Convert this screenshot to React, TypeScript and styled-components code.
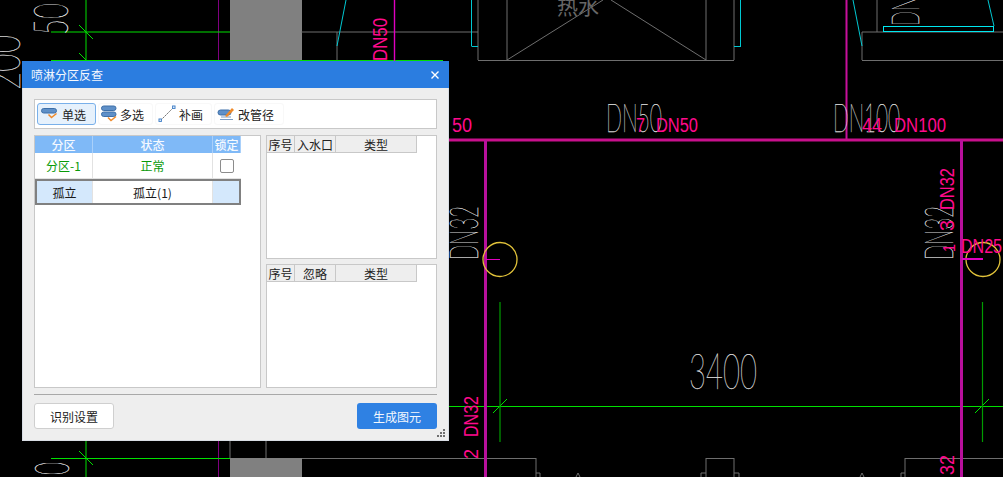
import styled, { createGlobalStyle } from 'styled-components';

const GlobalStyle = createGlobalStyle`
	html, body {
		margin: 0;
		padding: 0;
		background: #000;
	}
	* {
		box-sizing: border-box;
	}
`;

const CJK = `"Noto Sans CJK SC", "Liberation Sans", sans-serif`;

type Seg = [number, number, number, number];

const GRAY: Seg[] = [
	[301, 32, 478, 32],
	[337, 32, 337, 60],
	[478, 0, 478, 60],
	[478, 60.5, 734, 60.5],
	[507, 0, 507, 60],
	[706, 0, 706, 60],
	[734, 0, 734, 60],
	[507, 60, 603, 0],
	[706, 60, 611, 0],
	[862, 32, 862, 60],
	[862, 60.5, 1003, 60.5],
	[862, 32, 1003, 32],
	[877, 0, 877, 32],
	[230, 440, 230, 458],
	[266, 440, 266, 458],
	[302, 458.5, 536, 458.5],
	[536, 458, 536, 477],
	[536, 473, 540, 473],
	[540, 473, 540, 477],
	[706, 458.5, 734, 458.5],
	[706, 458, 706, 477],
	[734, 458, 734, 477],
	[701, 473, 706, 473],
	[701, 473, 701, 477],
	[734, 473, 739, 473],
	[739, 473, 739, 477],
	[905, 458.5, 1003, 458.5],
	[905, 458, 905, 477],
	[901, 473, 905, 473],
	[901, 473, 901, 477],
	[576, 477, 578, 473],
	[578, 473, 580, 477],
	[860, 477, 862, 473],
	[862, 473, 864, 477],
];

const GREEN: Seg[] = [
	[51, 32, 230, 32],
	[86, 0, 86, 61],
	[79, 25, 93, 39],
	[79, 53, 86, 60],
	[51, 60.5, 443, 60.5],
	[51, 458.5, 230, 458.5],
	[86, 440, 86, 477],
	[79, 451, 93, 465],
	[449, 406.5, 1003, 406.5],
	[493, 413, 507, 399],
	[975, 413, 989, 399],
];

const CYAN: Seg[] = [
	[346, 0, 337, 46],
	[471.5, 0, 471.5, 46],
	[471.5, 46.5, 478, 46.5],
	[734, 46.5, 741, 46.5],
	[740.5, 0, 740.5, 46],
	[853, 0, 862, 46],
	[988, 0, 994, 26],
];

const Page = styled.div`
	position: relative;
	width: 1003px;
	height: 477px;
	overflow: hidden;
	background: #000;
	font-family: ${CJK};
`;

const Canvas = styled.svg`
	position: absolute;
	inset: 0;
	display: block;
`;

const Dialog = styled.section`
	position: absolute;
	left: 22px;
	top: 61px;
	width: 427px;
	height: 380px;
	display: flex;
	flex-direction: column;
	background: #eeeeee;
	border: 1px solid #d8dde4;
	border-top: 0;
`;

const TitleBar = styled.header`
	height: 27px;
	margin: 0 -1px;
	padding: 0 9px 0 9px;
	display: flex;
	align-items: center;
	justify-content: space-between;
	background: #2b7de0;
	color: #f4f8fe;
	font-size: 12px;
`;

const CloseButton = styled.button`
	width: 10px;
	height: 10px;
	padding: 0;
	border: 0;
	background: none;
	display: block;
`;

const Content = styled.div`
	flex: 1;
	display: flex;
	flex-direction: column;
	padding: 11px 11px 0;
`;

const Toolbar = styled.div`
	height: 30px;
	display: flex;
	align-items: center;
	gap: 2px;
	padding: 0 1px 0 2px;
	background: #fff;
	border: 1px solid #c8c8c8;
`;

const ToolButton = styled.button<{ $active?: boolean; $w: number }>`
	width: ${(p) => p.$w}px;
	height: 22px;
	padding: 0 0 0 2px;
	display: flex;
	align-items: center;
	gap: 3px;
	border-radius: 3px;
	border: 1px solid ${(p) => (p.$active ? '#79b0ea' : '#f8f8f8')};
	background: ${(p) => (p.$active ? '#e6f1fc' : '#fff')};
	color: #222;
	font: 12px ${CJK};
	white-space: nowrap;
`;

const Panels = styled.div`
	margin-top: 6px;
	height: 253px;
	display: grid;
	grid-template-columns: 227px 171px;
	gap: 5px;
`;

const LeftPanel = styled.div`
	background: #fff;
	border: 1px solid #c8c8c8;
`;

const RightColumn = styled.div`
	display: grid;
	grid-template-rows: 1fr 1fr;
	gap: 5px;
`;

const RightPanel = styled.div`
	background: #fff;
	border: 1px solid #c8c8c8;
`;

const PartitionRow = styled.div<{ $height: number; $selected?: boolean }>`
	width: 206px;
	height: ${(p) => p.$height}px;
	display: grid;
	grid-template-columns: ${(p) => (p.$selected ? '56px 120px 26px' : '58px 120px 28px')};
	border: ${(p) => (p.$selected ? '2px solid #808080' : '0')};
	border-bottom: ${(p) => (p.$selected ? '2px solid #808080' : '1px solid #e2e2e2')};
	font-size: 12px;
`;

const Cell = styled.div<{ $bg?: string; $color?: string; $last?: boolean }>`
	display: flex;
	align-items: center;
	justify-content: center;
	min-width: 0;
	white-space: nowrap;
	background: ${(p) => p.$bg ?? 'transparent'};
	color: ${(p) => p.$color ?? '#1a1a1a'};
	border-right: ${(p) => (p.$last ? '0' : '1px solid #e2e2e2')};
`;

const HeadCell = styled(Cell)`
	background: #7fb9f7;
	color: #f6faff;
	font-weight: 500;
	border-right: 1px solid #a9d0fa;
`;

const LockBox = styled.span`
	width: 14px;
	height: 14px;
	border: 1px solid #8c8c8c;
	border-radius: 2px;
	background: #fff;
`;

const ListHead = styled.div`
	width: 150px;
	height: 17px;
	display: grid;
	grid-template-columns: 28px 41px 81px;
	background: #eeeeee;
	border-bottom: 1px solid #c8c8c8;
	font-size: 12px;
	color: #222;
`;

const ListHeadCell = styled.div`
	display: flex;
	align-items: center;
	justify-content: center;
	white-space: nowrap;
	border-right: 1px solid #c8c8c8;
`;

const Divider = styled.hr`
	margin: 6px 0 0;
	border: 0;
	border-top: 1px solid #a8a8a8;
	height: 0;
`;

const Footer = styled.footer`
	margin-top: 8px;
	display: flex;
	justify-content: space-between;
	align-items: flex-start;
`;

const SettingsButton = styled.button`
	width: 80px;
	height: 26px;
	padding: 0;
	background: #fff;
	border: 1px solid #cfcfcf;
	border-radius: 3px;
	color: #222;
	font: 12px ${CJK};
`;

const PrimaryButton = styled.button`
	width: 80px;
	height: 26px;
	padding: 0;
	background: #2f81e3;
	border: 0;
	border-radius: 3px;
	color: #f4f8fe;
	font: 12px ${CJK};
`;

const Grip = styled.svg`
	position: absolute;
	right: 2px;
	bottom: 2px;
	display: block;
`;

const SingleIcon = () => (
	<svg width="19" height="16" viewBox="0 0 19 16">
		<rect x="1.5" y="2.5" width="15" height="4.5" rx="2.2" fill="#5f90c8" stroke="#3d6fa8" />
		<path d="M8.5 8.5l3 3 5-4" fill="none" stroke="#ef8a2a" strokeWidth="1.5" />
	</svg>
);

const MultiIcon = () => (
	<svg width="16" height="18" viewBox="0 0 16 18">
		<rect x="0.5" y="1" width="14.5" height="4.5" rx="2.2" fill="#5f90c8" stroke="#3d6fa8" />
		<rect x="0.5" y="7" width="14.5" height="4.5" rx="2.2" fill="#5f90c8" stroke="#3d6fa8" />
		<path d="M7 12.5l3 3 5-4" fill="none" stroke="#ef8a2a" strokeWidth="1.5" />
	</svg>
);

const LineIcon = () => (
	<svg width="18" height="18" viewBox="0 0 18 18">
		<path d="M3 15L15 3" stroke="#777" strokeWidth="1" strokeDasharray="2 0.6" />
		<rect x="1" y="14" width="2.4" height="2.4" fill="#fff" stroke="#3f7fc8" />
		<rect x="14.6" y="1" width="2.4" height="2.4" fill="#fff" stroke="#3f7fc8" />
	</svg>
);

const PipeIcon = () => (
	<svg width="18" height="16" viewBox="0 0 18 16">
		<rect x="1" y="4" width="13" height="5" rx="2.5" fill="#5f90c8" stroke="#3d6fa8" />
		<path d="M4 11h10M3 13.5h13" stroke="#7a9cc4" strokeWidth="1" />
		<path d="M8 10l7-8 2 2-7 7z" fill="#ef8a2a" />
	</svg>
);

const CadLines = ({ segs, color, width = 1 }: { segs: Seg[]; color: string; width?: number }) => (
	<g stroke={color} strokeWidth={width} fill="none">
		{segs.map((s, i) => (
			<line key={i} x1={s[0]} y1={s[1]} x2={s[2]} y2={s[3]} />
		))}
	</g>
);

// thin drawing text: h is the cap height, w the squeezed run length
const Dim = ({ x, y, w, h, r, children }: { x: number; y: number; w: number; h: number; r?: boolean; children: string }) => (
	<text
		transform={`translate(${x} ${y})${r ? ' rotate(-90)' : ''}`}
		fontFamily='"Lato", "Liberation Sans", sans-serif'
		fontWeight={100}
		fontSize={h / 0.72}
		fill="#fff"
		stroke="#e8e8e8"
		strokeWidth={0.25}
		textLength={w}
		lengthAdjust="spacingAndGlyphs"
	>
		{children}
	</text>
);

const Pink = ({ x, y, w, r, size = 19.5, children }: { x: number; y: number; w: number; r?: boolean; size?: number; children: string }) => (
	<text
		transform={`translate(${x} ${y})${r ? ' rotate(-90)' : ''}`}
		fontFamily='"Liberation Sans", sans-serif'
		fontSize={size}
		fill="#ff0a8c"
		textLength={w}
		lengthAdjust="spacingAndGlyphs"
	>
		{children}
	</text>
);

const Drawing = () => (
	<Canvas width="1003" height="477" viewBox="0 0 1003 477">
		<rect x="230" y="0" width="72" height="61" fill="#808080" />
		<rect x="230" y="458" width="72" height="19" fill="#808080" />
		<CadLines segs={GRAY} color="#6e6e6e" />
		<CadLines segs={[[218.5, 0, 218.5, 477]]} color="#800080" />
		<CadLines segs={GREEN} color="#00e000" />
		<CadLines segs={[[500, 302, 500, 442], [982.5, 302, 982.5, 442]]} color="#009c00" width={1.2} />
		<CadLines segs={CYAN} color="#00c8d2" />
		<rect x="883.5" y="26.5" width="110" height="5" fill="none" stroke="#00e8f0" />

		<CadLines segs={[[394.5, 0, 394.5, 61]]} color="#e000c0" width={1.4} />
		<CadLines segs={[[846.5, 0, 846.5, 140]]} color="#c8109c" width={2} />
		<CadLines segs={[[449, 140, 1003, 140]]} color="#c8108c" width={3} />
		<CadLines segs={[[485.5, 140, 485.5, 477], [961.5, 140, 961.5, 477]]} color="#b8109c" width={3} />

		<Dim x={20} y={90} w={55} h={34} r>200</Dim>
		<Dim x={68} y={35} w={32} h={34} r>50</Dim>
		<Dim x={69} y={475} w={13} h={35} r>0</Dim>
		<Dim x={606} y={132} w={56} h={29}>DN50</Dim>
		<Dim x={833} y={132} w={67} h={29}>DN100</Dim>
		<Dim x={478} y={260} w={54} h={29} r>DN32</Dim>
		<Dim x={953} y={260} w={54} h={29} r>DN32</Dim>
		<Dim x={689} y={389} w={68} h={36}>3400</Dim>
		<Dim x={919} y={26} w={30} h={28} r>DN</Dim>
		<text x="557" y="14" fontFamily='"Noto Sans CJK SC", sans-serif' fontSize="21" fill="#666">热水</text>

		<circle cx="500" cy="259.5" r="17" fill="none" stroke="#e2c33a" strokeWidth="1.3" />
		<circle cx="983" cy="259.5" r="17" fill="none" stroke="#e2c33a" strokeWidth="1.3" />
		<CadLines segs={[[486, 259.5, 500, 259.5]]} color="#e000c0" />
		<CadLines segs={[[962, 259, 983, 259]]} color="#e000c0" width={2} />

		<Pink x={452} y={132} w={20}>50</Pink>
		<Pink x={636} y={132} w={9}>7</Pink>
		<Pink x={656} y={132} w={42}>DN50</Pink>
		<Pink x={862} y={132} w={20}>44</Pink>
		<Pink x={894} y={132} w={52}>DN100</Pink>
		<Pink x={387} y={61} w={43} r>DN50</Pink>
		<Pink x={954} y={210} w={42} r>DN32</Pink>
		<Pink x={954} y={231} w={11} r>3</Pink>
		<Pink x={955} y={252} w={8} r size={16}>1</Pink>
		<Pink x={961} y={253} w={41}>DN25</Pink>
		<Pink x={478} y={437} w={41} r>DN32</Pink>
		<Pink x={478} y={459} w={10} r>2</Pink>
		<Pink x={954} y={475} w={20} r>32</Pink>
	</Canvas>
);

const ListHeader = ({ second }: { second: string }) => (
	<ListHead>
		<ListHeadCell>序号</ListHeadCell>
		<ListHeadCell>{second}</ListHeadCell>
		<ListHeadCell>类型</ListHeadCell>
	</ListHead>
);

const App = () => {
	return (
		<Page>
			<GlobalStyle />
			<Drawing />
			<Dialog>
				<TitleBar>
					<span>喷淋分区反查</span>
					<CloseButton aria-label="关闭">
						<svg width="10" height="10" viewBox="0 0 10 10" style={{ display: 'block' }}>
							<path d="M1.5 1.5l7 7M8.5 1.5l-7 7" stroke="#fff" strokeWidth="1.4" />
						</svg>
					</CloseButton>
				</TitleBar>
				<Content>
					<Toolbar>
						<ToolButton $active $w={59}><SingleIcon />单选</ToolButton>
						<ToolButton $w={55}><MultiIcon />多选</ToolButton>
						<ToolButton $w={57}><LineIcon />补画</ToolButton>
						<ToolButton $w={70}><PipeIcon />改管径</ToolButton>
					</Toolbar>
					<Panels>
						<LeftPanel>
							<PartitionRow $height={17}>
								<HeadCell>分区</HeadCell>
								<HeadCell>状态</HeadCell>
								<HeadCell>锁定</HeadCell>
							</PartitionRow>
							<PartitionRow $height={26}>
								<Cell $color="#089a08">分区-1</Cell>
								<Cell $color="#089a08">正常</Cell>
								<Cell $last><LockBox /></Cell>
							</PartitionRow>
							<PartitionRow $height={26} $selected>
								<Cell $bg="#d4e8fc">孤立</Cell>
								<Cell>孤立(1)</Cell>
								<Cell $bg="#d4e8fc" $last />
							</PartitionRow>
						</LeftPanel>
						<RightColumn>
							<RightPanel>
								<ListHeader second="入水口" />
							</RightPanel>
							<RightPanel>
								<ListHeader second="忽略" />
							</RightPanel>
						</RightColumn>
					</Panels>
					<Divider />
					<Footer>
						<SettingsButton>识别设置</SettingsButton>
						<PrimaryButton>生成图元</PrimaryButton>
					</Footer>
				</Content>
				<Grip width="9" height="9" viewBox="0 0 9 9">
					<path d="M6 0h2v2H6zM3 3h2v2H3zM6 3h2v2H6zM0 6h2v2H0zM3 6h2v2H3zM6 6h2v2H6z" fill="#707070" />
				</Grip>
			</Dialog>
		</Page>
	);
};

export default App;
